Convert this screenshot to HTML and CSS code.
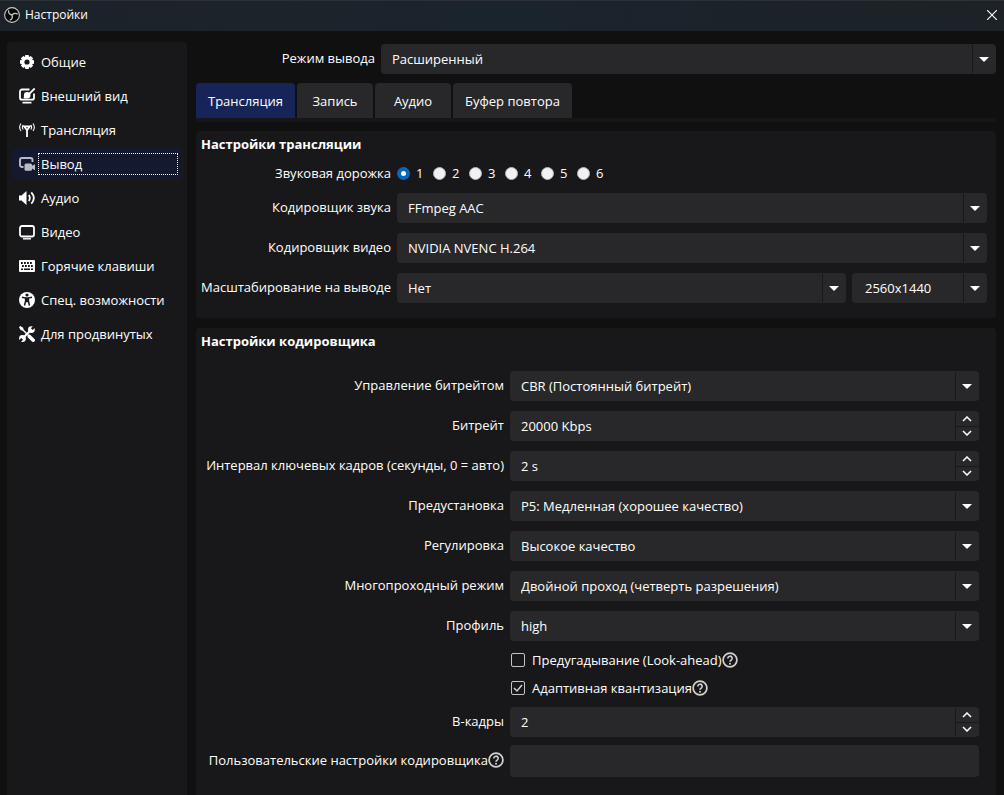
FILE: index.html
```html
<!DOCTYPE html>
<html lang="ru">
<head>
    <meta charset="UTF-8">
    <meta name="viewport" content="width=device-width, initial-scale=1.0">
    <title>Настройки</title>
    <link rel="stylesheet" href="styles.css">
</head>
<body>
    <!-- shared icons -->
    <svg class="sprite" aria-hidden="true">
        <symbol id="up" viewBox="0 0 10 6"><path d="M1 5l4-4 4 4" fill="none" stroke="#fff" stroke-width="1.5"/></symbol>
        <symbol id="down" viewBox="0 0 10 6"><path d="M1 1l4 4 4-4" fill="none" stroke="#fff" stroke-width="1.5"/></symbol>
        <symbol id="help" viewBox="0 0 16 16">
            <circle cx="8" cy="8" r="6.9" fill="none" stroke="#d0d0d0" stroke-width="1.7"/>
            <path d="M5.8 6.4a2.2 2.2 0 1 1 3.3 1.9C8.3 8.8 8 9 8 9.8" fill="none" stroke="#d0d0d0" stroke-width="1.6"/>
            <circle cx="8" cy="11.7" r="1" fill="#d0d0d0"/>
        </symbol>
    </svg>

    <header class="titlebar">
        <svg class="logo" viewBox="0 0 16 16">
            <circle cx="8" cy="8" r="7.4" fill="#050505" stroke="#c8c8c8" stroke-width="1.1"/>
            <g fill="none" stroke="#c8c8c8" stroke-width="1.3">
                <path d="M8 8C5.500 7.600 4.200 5.800 4.600 3.400"/>
                <path d="M8 8C5.500 7.600 4.200 5.800 4.600 3.400" transform="rotate(120 8 8)"/>
                <path d="M8 8C5.500 7.600 4.200 5.800 4.600 3.400" transform="rotate(240 8 8)"/>
            </g>
        </svg>
        <h1>Настройки</h1>
        <button class="close" aria-label="Закрыть">
            <svg viewBox="0 0 10 10"><path d="M0 0l10 10M10 0L0 10" stroke="#fff" stroke-width="1.1"/></svg>
        </button>
    </header>

    <div class="window">
        <nav class="sidebar">
            <a href="#general">
                <svg viewBox="0 0 16 16"><path fill-rule="evenodd" fill="#fff" d="M6.3 1h3.4l.4 1.9 1.600-1 2.400 2.400-1 1.600 1.900.4v3.400l-1.900.4 1 1.600-2.400 2.400-1.600-1-.4 1.900H6.300l-.4-1.900-1.600 1-2.400-2.400 1-1.600L1 9.700V6.300l1.900-.4-1-1.600 2.400-2.400 1.600 1zM8 5.400a2.600 2.600 0 1 0 0 5.200 2.600 2.600 0 0 0 0-5.200z"/></svg>
                <span>Общие</span>
            </a>
            <a href="#appearance">
                <svg viewBox="0 0 16 16" fill="none" stroke="#fff" stroke-width="1.8"><path d="M10.500 1.500H3a2 2 0 0 0-2 2v6.200a2 2 0 0 0 2 2h10a2 2 0 0 0 2-2V5.500"/><path d="M3.500 14.700h9M15.700.4L10 6.200"/><path d="M4.500 10c.8-.8.2-1.700.4-2.800a3.300 3.300 0 1 1 3.500 3.300c-1.400.2-2.800.1-3.900-.5z" fill="#fff" stroke="none"/></svg>
                <span>Внешний вид</span>
            </a>
            <a href="#stream">
                <svg viewBox="0 0 16 16" fill="none" stroke="#fff"><path d="M2 1.500C.2 4 .2 6.500 2 9M14 1.500c1.800 2.500 1.800 5 0 7.500M4.200 3c-1.100 1.500-1.100 3 0 4.500M11.800 3c1.100 1.500 1.100 3 0 4.500" stroke-width="1.1"/><path d="M8 15V8.200M5.200 4.400h5.600L8 8.200z" stroke-width="1.8"/></svg>
                <span>Трансляция</span>
            </a>
            <a href="#output" class="current" aria-current="page">
                <svg viewBox="0 0 16 16"><path d="M4.500 11H3a2 2 0 0 1-2-2V4a2 2 0 0 1 2-2h8.500a2 2 0 0 1 2 2v2" fill="none" stroke="#b9bcc8" stroke-width="1.9"/><path d="M7 7.500h4.500A1.500 1.500 0 0 1 13 9v.8l3-1.600v6l-3-1.600v.6a1.500 1.500 0 0 1-1.500 1.500H7a1.500 1.500 0 0 1-1.500-1.500V9A1.500 1.500 0 0 1 7 7.500z" fill="#b9bcc8"/></svg>
                <span>Вывод</span>
            </a>
            <a href="#audio">
                <svg viewBox="0 0 16 16"><path d="M0 5.500h2.500L7.500 1v14l-5-4.500H0z" fill="#fff"/><path d="M9.800 5c1.400 2 1.400 4 0 6M12.300 2.300c3.300 3.700 3.300 7.700 0 11.400" fill="none" stroke="#fff" stroke-width="1.8"/></svg>
                <span>Аудио</span>
            </a>
            <a href="#video">
                <svg viewBox="0 0 16 16"><rect x="1" y="2" width="14" height="10.500" rx="2" fill="none" stroke="#fff" stroke-width="1.8"/><path d="M4 14.800h8" stroke="#fff" stroke-width="1.4"/></svg>
                <span>Видео</span>
            </a>
            <a href="#hotkeys">
                <svg viewBox="0 0 16 16"><rect y="2" width="16" height="12" rx="1" fill="#fff"/><path d="M2 5h12M3 8h11" stroke="#18181a" stroke-width="1.8" stroke-dasharray="1.8 1.2"/><path d="M2 11.200h2M5 11.200h6M12 11.200h2" stroke="#18181a" stroke-width="1.6"/></svg>
                <span>Горячие клавиши</span>
            </a>
            <a href="#accessibility">
                <svg viewBox="0 0 16 16"><circle cx="8" cy="8" r="8" fill="#fff"/><circle cx="8" cy="3" r="1.6" fill="#18181a"/><path d="M3 5.200l3.600.8v3L5.500 13.500M13 5.200L9.400 6v3l1.100 4.500" fill="none" stroke="#18181a" stroke-width="1.5"/><path d="M6 5.400h4v4.800H6z" fill="#18181a"/></svg>
                <span>Спец. возможности</span>
            </a>
            <a href="#advanced">
                <svg viewBox="0 0 16 16">
                    <circle cx="12.400" cy="3.600" r="3.400" fill="#fff"/>
                    <circle cx="3.500" cy="12.500" r="3.400" fill="#fff"/>
                    <path d="M12.800 3.200L16 0M3.100 12.900L0 16" stroke="#18181a" stroke-width="2.6"/>
                    <path d="M4.500 11.500l7-7" stroke="#fff" stroke-width="2.2"/>
                    <path d="M3 3l7 7" stroke="#fff" stroke-width="1.4"/>
                    <path d="M0 1.200L1.200 0l3 1.800.4 2.800-2.800-.4z" fill="#fff"/>
                    <path d="M10.400 10.400l3.800 3.800" stroke="#fff" stroke-width="3.6" stroke-linecap="round"/>
                </svg>
                <span>Для продвинутых</span>
            </a>
        </nav>

        <main class="content">
            <div class="row mode">
                <label for="mode">Режим вывода</label>
                <select id="mode"><option>Расширенный</option></select>
            </div>

            <div class="tabs" role="tablist">
                <button role="tab" class="active" aria-selected="true">Трансляция</button>
                <button role="tab">Запись</button>
                <button role="tab">Аудио</button>
                <button role="tab">Буфер повтора</button>
            </div>

            <section class="group stream">
                <h2>Настройки трансляции</h2>
                <div class="row tracks" role="radiogroup" aria-labelledby="track-label">
                    <span class="label" id="track-label">Звуковая дорожка</span>
                    <div class="radios">
                        <label><input type="radio" name="track" checked>1</label>
                        <label><input type="radio" name="track">2</label>
                        <label><input type="radio" name="track">3</label>
                        <label><input type="radio" name="track">4</label>
                        <label><input type="radio" name="track">5</label>
                        <label><input type="radio" name="track">6</label>
                    </div>
                </div>
                <div class="row">
                    <label for="aenc">Кодировщик звука</label>
                    <select id="aenc"><option>FFmpeg AAC</option></select>
                </div>
                <div class="row">
                    <label for="venc">Кодировщик видео</label>
                    <select id="venc"><option>NVIDIA NVENC H.264</option></select>
                </div>
                <div class="row">
                    <label for="scale">Масштабирование на выводе</label>
                    <select id="scale"><option>Нет</option></select>
                    <select class="resolution" aria-label="Разрешение"><option>2560x1440</option></select>
                </div>
            </section>

            <section class="group encoder">
                <h2>Настройки кодировщика</h2>
                <div class="row">
                    <label for="rate">Управление битрейтом</label>
                    <select id="rate"><option>CBR (Постоянный битрейт)</option></select>
                </div>
                <div class="row">
                    <label for="bitrate">Битрейт</label>
                    <div class="spin">
                        <input type="text" id="bitrate" value="20000 Kbps">
                        <div class="steps">
                            <button aria-label="Больше"><svg><use href="#up"/></svg></button>
                            <button aria-label="Меньше"><svg><use href="#down"/></svg></button>
                        </div>
                    </div>
                </div>
                <div class="row">
                    <label for="keyint">Интервал ключевых кадров (секунды, 0 = авто)</label>
                    <div class="spin">
                        <input type="text" id="keyint" value="2 s">
                        <div class="steps">
                            <button aria-label="Больше"><svg><use href="#up"/></svg></button>
                            <button aria-label="Меньше"><svg><use href="#down"/></svg></button>
                        </div>
                    </div>
                </div>
                <div class="row">
                    <label for="preset">Предустановка</label>
                    <select id="preset"><option>P5: Медленная (хорошее качество)</option></select>
                </div>
                <div class="row">
                    <label for="tuning">Регулировка</label>
                    <select id="tuning"><option>Высокое качество</option></select>
                </div>
                <div class="row">
                    <label for="multipass">Многопроходный режим</label>
                    <select id="multipass"><option>Двойной проход (четверть разрешения)</option></select>
                </div>
                <div class="row">
                    <label for="profile">Профиль</label>
                    <select id="profile"><option>high</option></select>
                </div>
                <div class="checks">
                    <label><input type="checkbox">Предугадывание (Look-ahead)<svg class="help"><use href="#help"/></svg></label>
                    <label><input type="checkbox" checked>Адаптивная квантизация<svg class="help"><use href="#help"/></svg></label>
                </div>
                <div class="row">
                    <label for="bframes">B-кадры</label>
                    <div class="spin">
                        <input type="text" id="bframes" value="2">
                        <div class="steps">
                            <button aria-label="Больше"><svg><use href="#up"/></svg></button>
                            <button aria-label="Меньше"><svg><use href="#down"/></svg></button>
                        </div>
                    </div>
                </div>
                <div class="row custom">
                    <label for="custom">Пользовательские настройки кодировщика<svg class="help"><use href="#help"/></svg></label>
                    <input type="text" id="custom">
                </div>
            </section>
        </main>
    </div>
</body>
</html>
```
FILE: styles.css
```css
* {
    box-sizing: border-box;
}
body {
    margin: 0;
    height: 100vh;
    display: flex;
    flex-direction: column;
    overflow: hidden;
    background: #101010;
    color: #fff;
    font: 13px/18px "Open Sans", sans-serif;
}
button, input, select {
    font: inherit;
    color: inherit;
    margin: 0;
    border: 0;
    background: none;
}
.sprite {
    display: none;
}

/* title bar */
.titlebar {
    display: flex;
    align-items: center;
    flex: none;
    height: 31px;
    padding: 0 7px 2px 4px;
    border-top: 1px solid #2d3034;
    background: linear-gradient(90deg, #1d2229, #1a242d 50%, #1c2227);
}
.logo {
    width: 16px;
    height: 16px;
}
.titlebar h1 {
    margin: 0 auto 0 5px;
    font-size: 12px;
    font-weight: 400;
}
.close {
    display: flex;
    padding: 0;
}
.close svg {
    width: 10px;
    height: 10px;
}

.window {
    display: flex;
    flex: 1;
    gap: 9px;
    min-height: 0;
    padding: 11px 8px 0 7px;
}

/* sidebar */
.sidebar {
    display: flex;
    flex-direction: column;
    gap: 2px;
    flex: none;
    width: 180px;
    padding: 4px 5px;
    border-radius: 4px 4px 0 0;
    background: #18181a;
}
.sidebar a {
    display: flex;
    align-items: center;
    gap: 3px;
    height: 32px;
    padding: 0 4px 0 7px;
    border-radius: 4px;
    color: #fff;
    text-decoration: none;
}
.sidebar svg {
    flex: none;
    width: 16px;
    height: 16px;
}
.sidebar span {
    flex: 1;
    padding: 1px 2px;
    border: 1px dotted transparent;
}
.sidebar .current {
    background: #141930;
}
.sidebar .current span {
    border-color: #fff;
}

/* form rows */
.content {
    flex: 1;
    min-width: 0;
    padding-top: 2px;
}
.row {
    display: flex;
    align-items: center;
    gap: 6px;
    margin-top: 10px;
}
.row > label,
.row > .label {
    display: flex;
    align-items: center;
    justify-content: flex-end;
    flex: none;
    padding-bottom: 2px;
    white-space: nowrap;
}
select {
    flex: 1;
    min-width: 0;
    height: 30px;
    padding: 0 32px 0 11px;
    border-radius: 4px;
    appearance: none;
    background-color: #28282a;
    background-image:
        url("data:image/svg+xml,%3Csvg xmlns='http://www.w3.org/2000/svg' width='10' height='5'%3E%3Cpath d='M0 0h10L5 5z' fill='white'/%3E%3C/svg%3E"),
        linear-gradient(#18181a, #18181a);
    background-repeat: no-repeat;
    background-position: right 7px center, right 23px center;
    background-size: 10px 5px, 1px 28px;
}
.mode {
    margin-top: 0;
}
.mode > label {
    width: 179px;
}

/* tabs */
.tabs {
    display: flex;
    gap: 2px;
    margin-top: 9px;
    border-bottom: 4px solid #161618;
}
.tabs button {
    min-width: 76px;
    height: 35px;
    padding: 0 12px;
    border-radius: 4px 4px 0 0;
    background: #28282a;
}
.tabs .active {
    background: #162458;
}

.group {
    margin-top: 9px;
    padding: 4px 9px 15px;
    border-radius: 4px;
    background: #18181a;
}
.group h2 {
    margin: 0 -4px;
    font-size: 13px;
    line-height: 18px;
}
.stream .row > label,
.stream .row > .label {
    width: 186px;
}
.stream .resolution {
    flex: none;
    width: 135px;
    padding-left: 13px;
}

/* radios */
.stream .tracks {
    height: 20px;
}
.tracks > .label {
    padding: 0;
}
.radios {
    display: flex;
    gap: 9px;
}
.radios label {
    display: flex;
    align-items: center;
    gap: 6px;
    width: 27px;
}
input[type="radio"] {
    flex: none;
    width: 13px;
    height: 13px;
    border: 1px solid #b5b5b5;
    border-radius: 50%;
    appearance: none;
    background: #f1f1f1;
}
input[type="radio"]:checked {
    border: 4px solid #0b66b8;
    background: #fff;
}

/* encoder */
.encoder {
    margin-top: 10px;
    padding: 4px 17px 20px;
    border-radius: 4px 4px 0 0;
}
.encoder h2 {
    margin: 0 -12px 21px;
}
.encoder .row > label {
    width: 291px;
}
.spin {
    display: flex;
    flex: 1;
    min-width: 0;
    height: 30px;
    border-radius: 4px;
    background: #28282a;
}
.spin input {
    flex: 1;
    min-width: 0;
    padding: 0 11px;
}
.steps {
    display: flex;
    flex-direction: column;
    width: 24px;
    margin: 1px 0;
    padding-right: 1px;
    border-left: 1px solid #18181a;
}
.steps button {
    display: flex;
    align-items: center;
    justify-content: center;
    flex: 1;
    padding: 0;
}
.steps button + button {
    border-top: 1px solid #18181a;
}
.steps svg {
    width: 10px;
    height: 6px;
}
.checks {
    margin: 5px 0 -5px 298px;
}
.checks label {
    display: flex;
    align-items: center;
    height: 28px;
}
input[type="checkbox"] {
    width: 14px;
    height: 14px;
    margin-right: 7px;
    border: 1px solid #c4c4c4;
    border-radius: 2px;
    appearance: none;
}
input[type="checkbox"]:checked {
    background: url("data:image/svg+xml,%3Csvg xmlns='http://www.w3.org/2000/svg' width='12' height='12'%3E%3Cpath d='M2 6l3 3 5-6' fill='none' stroke='%23d0d0d0' stroke-width='1.5'/%3E%3C/svg%3E") center no-repeat;
}
.help {
    flex: none;
    width: 16px;
    height: 16px;
}
.custom {
    margin-top: 8px;
}
.custom input {
    flex: 1;
    min-width: 0;
    height: 32px;
    padding: 0 11px;
    border-radius: 4px;
    background: #28282a;
}
```
